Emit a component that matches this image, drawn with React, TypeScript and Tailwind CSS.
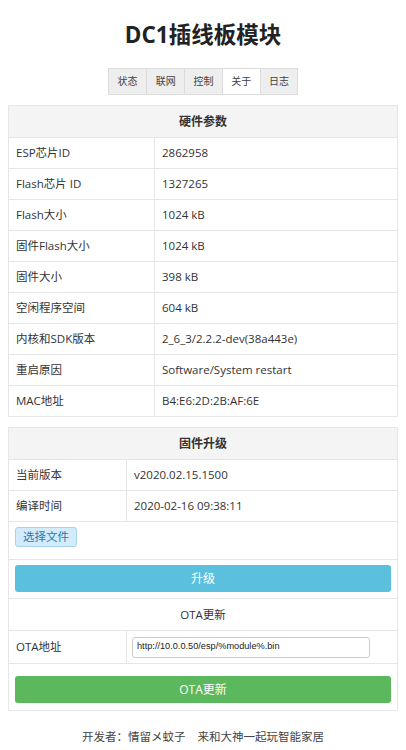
import React from "react";

const font = { fontFamily: "'Open Sans','Noto Sans CJK SC',sans-serif" };

const hw: [string, string][] = [
  ["ESP芯片ID", "2862958"],
  ["Flash芯片 ID", "1327265"],
  ["Flash大小", "1024 kB"],
  ["固件Flash大小", "1024 kB"],
  ["固件大小", "398 kB"],
  ["空闲程序空间", "604 kB"],
  ["内核和SDK版本", "2_6_3/2.2.2-dev(38a443e)"],
  ["重启原因", "Software/System restart"],
  ["MAC地址", "B4:E6:2D:2B:AF:6E"],
];

const tabs = ["状态", "联网", "控制", "关于", "日志"];

export default function App() {
  return (
    <div className="w-[406px] h-[750px] bg-white text-[#333] text-[11.5px] overflow-hidden" style={font}>
      <h1 className="pt-[17px] h-[68px] text-center text-[22.5px] font-bold text-[#222] leading-[36px]">
        DC1插线板模块
      </h1>
      <div className="flex justify-center">
        <div className="flex h-[27px] border border-[#dcdcdc]">
          {tabs.map((t, i) => (
            <div
              key={t}
              className={`w-[37.8px] flex items-center justify-center text-[10px] text-[#444] ${i > 0 ? "border-l border-[#dcdcdc]" : ""} ${t === "关于" ? "bg-white" : "bg-[#eeeeee]"}`}
            >
              {t}
            </div>
          ))}
        </div>
      </div>

      <div className="mx-[8px] mt-[10px] border border-[#e6e6e6]">
        <div className="h-[31px] bg-[#f4f4f4] flex items-center justify-center font-bold text-[12px]">硬件参数</div>
        {hw.map(([k, v]) => (
          <div key={k} className="flex h-[31px] border-t border-[#e6e6e6]">
            <div className="w-[146px] pl-[7px] flex items-center border-r border-[#e6e6e6]">{k}</div>
            <div className="flex-1 pl-[7px] flex items-center">{v}</div>
          </div>
        ))}
      </div>

      <div className="mx-[8px] mt-[10px] border border-[#e6e6e6]">
        <div className="h-[31px] bg-[#f4f4f4] flex items-center justify-center font-bold text-[12px]">固件升级</div>
        {[
          ["当前版本", "v2020.02.15.1500"],
          ["编译时间", "2020-02-16 09:38:11"],
        ].map(([k, v]) => (
          <div key={k} className="flex h-[31px] border-t border-[#e6e6e6]">
            <div className="w-[118px] pl-[7px] flex items-center border-r border-[#e6e6e6]">{k}</div>
            <div className="flex-1 pl-[7px] flex items-center">{v}</div>
          </div>
        ))}
        <div className="h-[38px] border-t border-[#e6e6e6] pl-[6px] pt-[5px]">
          <div className="w-[62px] h-[20px] rounded-[3px] border border-[#a8d3ef] bg-[#d3ecfb] text-[#2b78ad] flex items-center justify-center text-[11.5px]">
            选择文件
          </div>
        </div>
        <div className="h-[39px] border-t border-[#e6e6e6] px-[6px] pt-[5px]">
          <div className="h-[27px] rounded-[3px] bg-[#5bc0de] text-white flex items-center justify-center text-[12px]">升级</div>
        </div>
        <div className="h-[32px] border-t border-[#e6e6e6] flex items-center justify-center">OTA更新</div>
        <div className="flex h-[33px] border-t border-[#e6e6e6]">
          <div className="w-[118px] pl-[7px] flex items-center border-r border-[#e6e6e6]">OTA地址</div>
          <div className="flex-1 pl-[5px] flex items-center">
            <div
              className="w-[238px] h-[21px] border border-[#cccccc] rounded-[3px] pl-[4px] flex items-center text-[9.2px] text-[#222]"
              style={{ fontFamily: "'Liberation Sans',Arial,sans-serif" }}
            >
              http://10.0.0.50/esp/%module%.bin
            </div>
          </div>
        </div>
        <div className="h-[47px] border-t border-[#e6e6e6] px-[6px] pt-[12px]">
          <div className="h-[27px] rounded-[3px] bg-[#5cb85c] text-white flex items-center justify-center text-[12px]">OTA更新</div>
        </div>
      </div>

      <div className="mt-[17px] text-center text-[11.5px] text-[#444]">
        开发者：情留メ蚊子<span className="inline-block w-[12px]"></span>来和大神一起玩智能家居
      </div>
    </div>
  );
}
